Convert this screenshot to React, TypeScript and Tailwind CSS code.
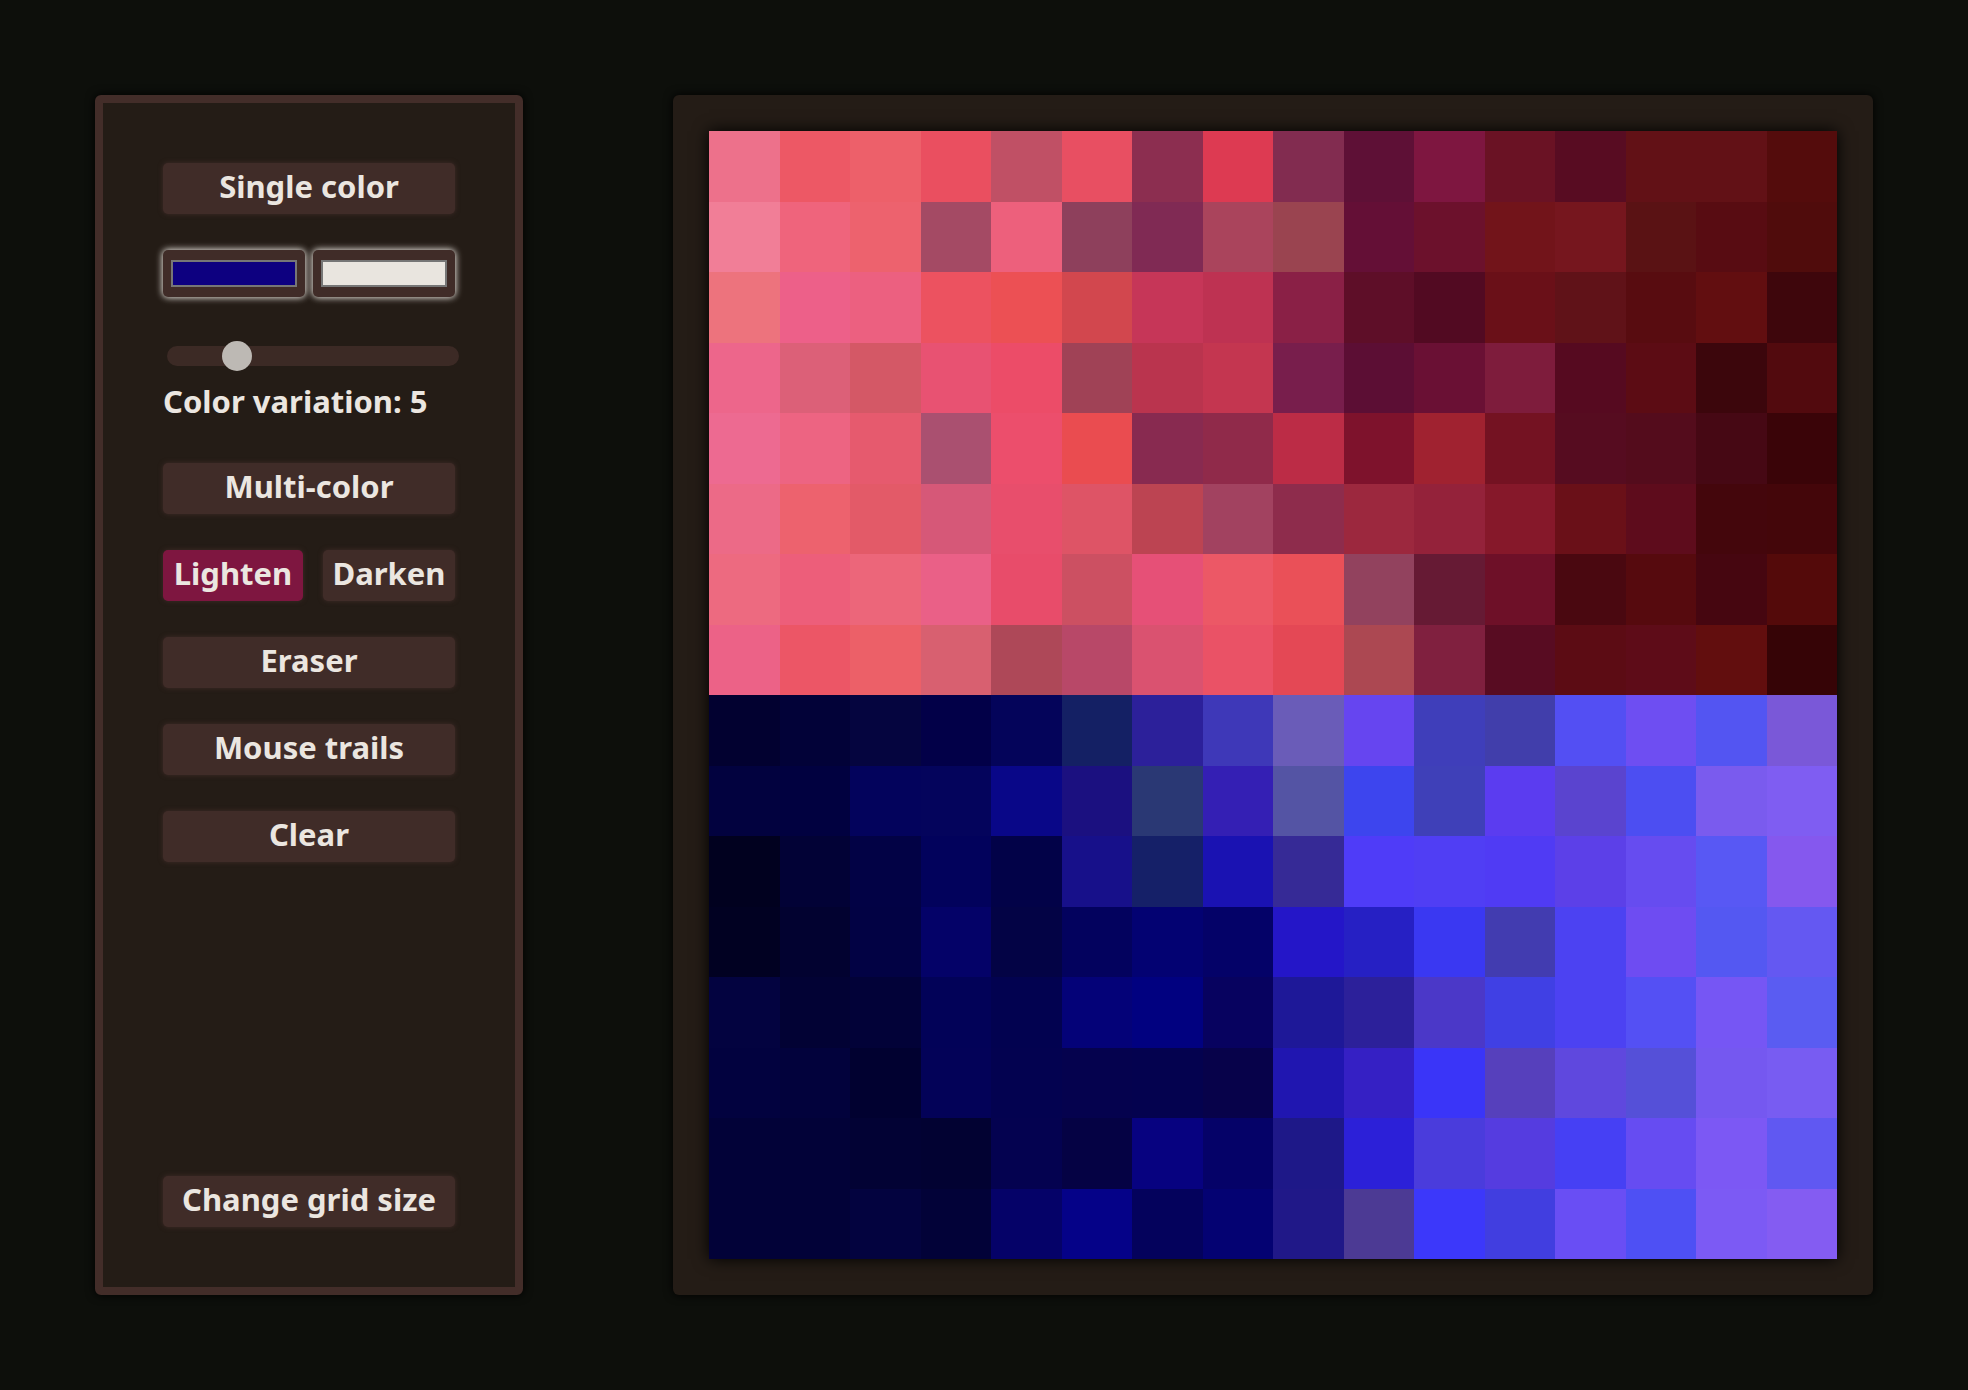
const pixels = [
  '#ed718b #ed5865 #ed606a #ea4f60 #c05065 #e84f62 #8c2e50 #dd3a52 #822c50 #5e1036 #7e1640 #6a1224 #580c22 #621116 #621116 #540c0c',
  '#f17e97 #ef647c #ed626e #a44a64 #ed607c #8e405c #802a54 #aa445c #9a4450 #640f36 #6c112c #72141a #76161e #5a1214 #580c12 #500c0c',
  '#ed737d #ed6089 #ec6080 #ec5260 #ec5054 #d2474e #c63658 #be3252 #8a2046 #5e0e28 #520a22 #6a1018 #601218 #580c10 #620e10 #3e060c',
  '#ed668b #dc6078 #d45866 #e85272 #ec4c68 #a04256 #ba344e #c43650 #781e4c #5c0e34 #6a1034 #7e1c3c #560a20 #5c0c14 #3c060c #520a0e',
  '#ed6a91 #ed6482 #e65a6e #aa5070 #ec4e6c #ea4c50 #882a50 #902a4a #bc2c46 #7e122c #a02230 #741222 #560c20 #540c1c #460814 #3a0408',
  '#ec6a87 #ed626e #e35a68 #d65878 #e84e6c #de5466 #bc4452 #a24260 #8e2c4c #9c283e #94223a #86182a #6a1018 #5e0c1c #44060c #44060a',
  '#ed6a80 #ed5e7a #ec667a #ea6087 #e84c6a #cc5062 #e65077 #ec5866 #ea5058 #92425e #661a34 #6e1028 #4a0810 #560a0e #460610 #540a0a',
  '#ec6287 #ec5666 #ec6068 #d86070 #ae4858 #b84868 #da5270 #ea5266 #e44855 #ac4852 #80203f #580c22 #5c0c14 #5e0c18 #620e0e #360406',
  '#020130 #020238 #05053f #020048 #04045a #142064 #2c209a #3e38b8 #6a5cb8 #6645f0 #3f3eba #413eab #534ff3 #6e4ef2 #5355f2 #7a58d8',
  '#02023f #010140 #03035c #04045c #090788 #1b1080 #2a3874 #341fb4 #5454a4 #3d45ee #3f40b8 #5b3cf0 #5a44cf #4c4ef2 #7a5bee #7f5df2',
  '#01011f #020236 #020245 #02025c #020248 #17108a #152068 #1a12b2 #362a96 #4f3cf8 #503ef4 #503bf4 #5c40e8 #664cf0 #5858f4 #8558ee',
  '#010122 #020230 #020244 #040268 #030345 #03025e #030272 #040268 #2416c8 #2620c4 #3a38f2 #423cb0 #4c42f2 #6e4cf2 #5458f2 #6458f2',
  '#030340 #020234 #020238 #020258 #020250 #040278 #010180 #07025f #1e1898 #2c209a #4b38c8 #4040e4 #4c42f2 #5450f4 #7656f4 #5a5cf2',
  '#02023f #02023c #010130 #030258 #030250 #05024e #04024f #07024a #2016b0 #3520c4 #3a35f8 #5640bc #5f48de #5550d8 #7558f0 #785cf2',
  '#020238 #020238 #020234 #020232 #040250 #050244 #070280 #050268 #1e1888 #2c20d8 #4a3cdc #553ce0 #4640f4 #664cf2 #7c58f4 #6058f2',
  '#020238 #020238 #03033f #020238 #050268 #050288 #04025c #040272 #201888 #4c3a94 #3c38fa #413ee0 #694ef4 #4e50f4 #7c5af4 #845cf2',
].flatMap((row) => row.split(' '))

function ToolButton({ label, active = false, className = 'w-full' }: { label: string; active?: boolean; className?: string }) {
  return (
    <button
      className={`${className} h-[51px] shrink-0 rounded-[5px] pb-1 text-[31px] leading-none font-bold text-[#ebe6e0] shadow-[0_0_5px_#402c28] ${active ? 'bg-[#7e1640]' : 'bg-[#402c28]'}`}
    >
      {label}
    </button>
  )
}

function Swatch({ color }: { color: string }) {
  return (
    <div className="flex h-[47px] w-[142px] items-center justify-center rounded-[5px] bg-[#402c28] shadow-[0_0_6px_#ebe6e0,0_0_10px_#ebe6e066]">
      <div className="h-[27px] w-[126px] border-2 border-[#767676]" style={{ backgroundColor: color }} />
    </div>
  )
}

export default function App() {
  return (
    <div className="flex h-[1390px] w-[1968px] items-start gap-[150px] bg-[#0d0f0b] pt-[95px] pl-[95px] font-['Noto_Sans',sans-serif]">
      {/* Tools */}
      <aside className="flex h-[1200px] w-[428px] shrink-0 flex-col rounded-[6px] border-8 border-[#432d29] bg-[#241c16] p-[60px] shadow-[0_0_10px_#000]">
        <ToolButton label="Single color" />

        <div className="mt-[36px] flex justify-between">
          <Swatch color="#0d0080" />
          <Swatch color="#e9e5df" />
        </div>

        <div className="relative mt-[49px] ml-1 h-5 w-full shrink-0 rounded-full bg-[#3c2a25]">
          <div className="absolute top-[-5px] left-[55px] h-[30px] w-[30px] rounded-full bg-[#bdb9b4]" />
        </div>
        <label className="mt-[15px] text-[31px] leading-[40px] font-bold whitespace-nowrap text-[#ebe6e0]">Color variation: 5</label>

        <div className="mt-[42px] flex flex-col gap-[36px]">
          <ToolButton label="Multi-color" />
          <div className="flex justify-between">
            <ToolButton label="Lighten" active className="w-[140px]" />
            <ToolButton label="Darken" className="w-[132px]" />
          </div>
          <ToolButton label="Eraser" />
          <ToolButton label="Mouse trails" />
          <ToolButton label="Clear" />
        </div>

        <ToolButton label="Change grid size" className="mt-auto w-full" />
      </aside>

      {/* Canvas */}
      <main className="flex h-[1200px] w-[1200px] shrink-0 items-center justify-center rounded-[6px] bg-[#241c16] shadow-[0_0_10px_#000]">
        <div className="grid h-[1128px] w-[1128px] grid-cols-16 grid-rows-16 shadow-[0_0_15px_#000]">
          {pixels.map((color, i) => (
            <div key={i} style={{ backgroundColor: color }} />
          ))}
        </div>
      </main>
    </div>
  )
}
